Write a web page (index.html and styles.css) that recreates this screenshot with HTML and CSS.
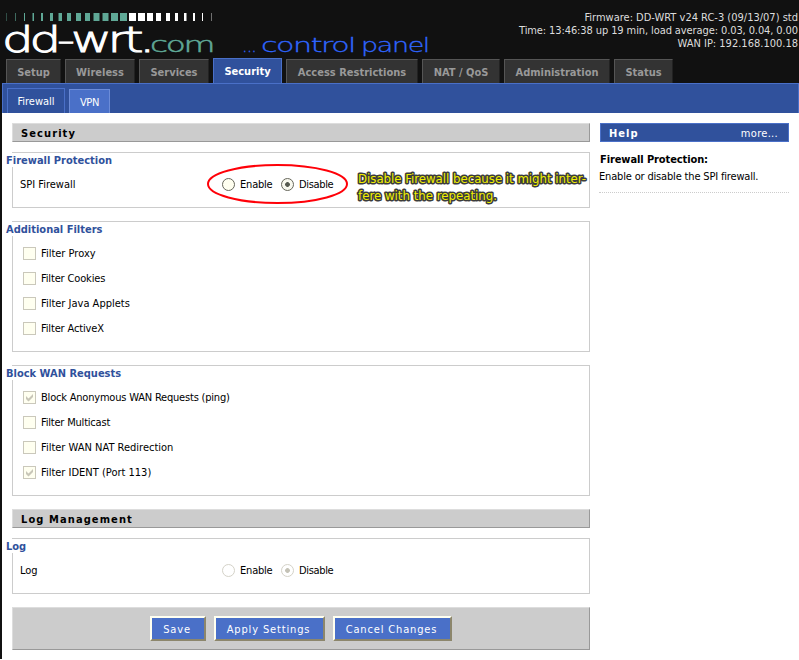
FILE: index.html
```html
<!DOCTYPE html>
<html lang="en">
<head>
<meta charset="utf-8">
<title>DD-WRT - Security</title>
<link rel="stylesheet" href="styles.css">
</head>
<body>
<header class="header">
  <svg class="logo" width="440" height="58" viewBox="0 0 440 58" role="img" aria-label="dd-wrt.com control panel">
    <g fill="#5fa896">
      <rect x="6" y="13" width="1" height="8" opacity=".4"/><rect x="15" y="13" width="1" height="8" opacity=".6"/><rect x="24" y="13" width="1" height="8"/><rect x="32.500" y="13" width="1.500" height="8"/><rect x="41" y="13" width="2" height="8"/><rect x="50" y="13" width="3" height="8"/><rect x="58.500" y="13" width="3.500" height="8"/><rect x="67" y="13" width="4" height="8"/><rect x="76" y="13" width="5" height="8"/><rect x="85" y="13" width="5" height="8"/><rect x="93.500" y="13" width="6" height="8"/><rect x="102.500" y="13" width="6" height="8"/><rect x="111" y="13" width="7" height="8"/><rect x="120" y="13" width="7" height="8"/>
    </g>
    <g fill="#fff">
      <rect x="129" y="13" width="7" height="8"/><rect x="138" y="13" width="7" height="8"/><rect x="147" y="13" width="6" height="8"/><rect x="156" y="13" width="5" height="8"/><rect x="166" y="13" width="4" height="8"/><rect x="175" y="13" width="3" height="8"/><rect x="184" y="13" width="2.500" height="8"/><rect x="193" y="13" width="2" height="8"/><rect x="202" y="13" width="1" height="8"/><rect x="211" y="13" width="1" height="8" opacity=".4"/>
    </g>
    <text class="logo-name" x="2" y="52" textLength="149" lengthAdjust="spacingAndGlyphs">dd-wrt.</text>
    <text class="logo-com" x="150" y="52" textLength="63" lengthAdjust="spacingAndGlyphs">com</text>
    <text class="logo-panel" x="242" y="52" textLength="14" lengthAdjust="spacingAndGlyphs">...</text>
    <text class="logo-panel" x="261" y="52" textLength="94" lengthAdjust="spacingAndGlyphs">control</text>
    <text class="logo-panel" x="361" y="52" textLength="68" lengthAdjust="spacingAndGlyphs">panel</text>
  </svg>
  <div class="info">
    <div>Firmware: DD-WRT v24 RC-3 (09/13/07) std</div>
    <div class="time">Time: 13:46:38 up 19 min, load average: 0.03, 0.04, 0.00</div>
    <div>WAN IP: 192.168.100.18</div>
  </div>
</header>
<nav class="tabs">
  <a>Setup</a><a>Wireless</a><a>Services</a><a class="active">Security</a><a>Access Restrictions</a><a>NAT / QoS</a><a>Administration</a><a>Status</a>
</nav>
<div class="page">
  <nav class="subtabs"><a class="current">Firewall</a><a class="other">VPN</a></nav>
  <div class="columns">
    <main class="main">
      <h2>Security</h2>
      <section class="group short">
        <h3>Firewall Protection</h3>
        <div class="setting">
          <span class="name">SPI Firewall</span>
          <i class="radio"></i><span class="enable">Enable</span>
          <i class="radio on"></i><span class="disable">Disable</span>
        </div>
        <svg class="note" width="390" height="50" viewBox="0 0 390 50">
          <ellipse cx="77.500" cy="25" rx="69.500" ry="19" fill="none" stroke="#ff0008" stroke-width="2"/>
          <text x="158" y="24" textLength="228" lengthAdjust="spacingAndGlyphs">Disable Firewall because it might inter-</text>
          <text x="158" y="41" textLength="139" lengthAdjust="spacingAndGlyphs">fere with the repeating.</text>
        </svg>
      </section>
      <section class="group">
        <h3>Additional Filters</h3>
        <div class="check"><i class="box"></i>Filter Proxy</div>
        <div class="check"><i class="box"></i><span class="tight">Filter Cookies</span></div>
        <div class="check"><i class="box"></i>Filter Java Applets</div>
        <div class="check"><i class="box"></i><span class="tight">Filter ActiveX</span></div>
      </section>
      <section class="group">
        <h3>Block WAN Requests</h3>
        <div class="check"><i class="box"><svg viewBox="0 0 11 11"><path d="M2 4v3l2.500 2.500L9 5V2L4.500 6.500z"/></svg></i><span class="tighter">Block Anonymous WAN Requests (ping)</span></div>
        <div class="check"><i class="box"></i><span class="tighter">Filter Multicast</span></div>
        <div class="check"><i class="box"></i>Filter WAN NAT Redirection</div>
        <div class="check"><i class="box"><svg viewBox="0 0 11 11"><path d="M2 4v3l2.500 2.500L9 5V2L4.500 6.500z"/></svg></i>Filter IDENT (Port 113)</div>
      </section>
      <h2>Log Management</h2>
      <section class="group short">
        <h3>Log</h3>
        <div class="setting">
          <span class="name">Log</span>
          <i class="radio off"></i><span class="enable">Enable</span>
          <i class="radio off on"></i><span class="disable">Disable</span>
        </div>
      </section>
      <div class="actions">
        <button class="save">Save</button><button class="apply">Apply Settings</button><button class="cancel">Cancel Changes</button>
      </div>
    </main>
    <aside class="help">
      <h2><span>Help</span><a>more...</a></h2>
      <h4>Firewall Protection:</h4>
      <p>Enable or disable the SPI firewall.</p>
    </aside>
  </div>
</div>
</body>
</html>
```
FILE: styles.css
```css
* { box-sizing: border-box; }
body {
  margin: 0;
  height: 660px;
  overflow: hidden;
  background: #fff;
  color: #000;
  font: 11px/13px "DejaVu Sans Condensed", "DejaVu Sans", sans-serif;
  font-stretch: condensed;
  white-space: nowrap;
}
h2, h3, h4, p { margin: 0; font-size: 11px; }
.header {
  height: 58px;
  background: #111;
  display: flex;
  justify-content: space-between;
}
.logo { overflow: visible; }
.logo-name, .logo-com, .logo-panel {
  font-family: "DejaVu Sans Light", "DejaVu Sans", sans-serif;
  font-weight: 200;
  font-stretch: normal;
}
.logo-name { font-size: 36px; letter-spacing: -3px; fill: #fff; stroke: #fff; stroke-width: 1px; }
.logo-com { font-size: 21px; letter-spacing: -1.5px; fill: #5fa896; stroke: #5fa896; stroke-width: .5px; }
.logo-panel { font-size: 20px; letter-spacing: -1px; fill: #2f66ff; stroke: #2f66ff; stroke-width: .3px; }
.info { padding: 11px 1px 0 0; color: #ddd; text-align: right; }
.time { letter-spacing: -.1px; }
.tabs {
  height: 25px;
  background: #111;
  padding-left: 6px;
  display: grid;
  grid-template-columns: 55px 70px 70px 69px 132px 78px 106px 59px;
  column-gap: 4px;
  align-items: end;
}
.tabs a {
  height: 24px;
  border: 1px solid #555;
  border-right-color: #222;
  border-bottom: 0;
  background: #333;
  color: #999;
  font-weight: bold;
  text-align: center;
  line-height: 25px;
}
.tabs .active { height: 25px; background: #30519c; border-color: #4a70c8; color: #fff; }
.page { border-left: 2px solid #111; height: 576px; }
.subtabs {
  height: 30px;
  background: #30519c;
  border: 1px solid #4a70c8;
  border-bottom: 0;
  display: flex;
  align-items: flex-end;
  gap: 4px;
  padding-left: 4px;
}
.subtabs a { color: #fff; text-align: center; border: 1px solid #4a70c8; border-bottom: 0; }
.subtabs .current { width: 58px; height: 25px; line-height: 25px; }
.subtabs .other { width: 41px; height: 24px; line-height: 25px; letter-spacing: -.3px; background: #4a70c8; border-color: #6c8cd8; }
.columns { display: flex; gap: 10px; padding: 10px 0 0 10px; }
.main { width: 578px; }
.main h2 {
  height: 19px;
  border: 1px solid #ddd;
  border-right-color: #999;
  border-bottom-color: #999;
  background: #ccc;
  padding-left: 8px;
  line-height: 19px;
  letter-spacing: 1.1px;
}
.group { position: relative; border: 1px solid #ccc; height: 131px; margin: 0 0 13px; }
.short { height: 56px; }
h2 + .group { margin-top: 10px; }
.group h3 { width: max-content; height: 14px; margin-left: -7px; background: #fff; color: #30519c; line-height: 15px; }
.setting { display: flex; align-items: center; height: 20px; margin-top: 7px; padding-left: 7px; }
.name { width: 202px; }
.enable { width: 41px; letter-spacing: -.2px; }
.disable { letter-spacing: -.35px; }
.radio {
  width: 13px;
  height: 13px;
  margin-right: 5px;
  border: 1px solid #66665a;
  border-radius: 50%;
  background: #fffff0;
}
.radio.on { background: radial-gradient(circle, #55594f 0 2px, #f8f8ee 2.700px); }
.radio.off { border-color: #d4d2c8; background: #fff; }
.radio.off.on { background: radial-gradient(circle, #c4c2b6 0 2px, #fff 2.700px); }
.note { position: absolute; left: 187px; top: 6px; }
.note text {
  font-size: 13px;
  fill: #f0f000;
  stroke: #3c3c3c;
  stroke-width: 3px;
  stroke-linejoin: round;
  paint-order: stroke;
}
.check { display: flex; align-items: center; height: 25px; padding-left: 10px; }
h3 + .check { margin-top: 5px; }
.tight { letter-spacing: -.15px; }
.tighter { letter-spacing: -.2px; }
.box { width: 13px; height: 13px; margin-right: 5px; border: 1px solid #cac8bb; background: #fffff0; }
.box svg { display: block; width: 11px; height: 11px; fill: #c8c6b8; }
.actions {
  height: 43px;
  border: 1px solid #ddd;
  border-right-color: #999;
  border-bottom-color: #999;
  background: #ccc;
  display: flex;
  justify-content: center;
  gap: 8px;
  padding-top: 8px;
}
.actions button {
  height: 25px;
  padding: 1px 2px 0 0;
  border: 2px solid;
  border-color: #fffff0 #8c866c #8c866c #fffff0;
  background: #4a70c8;
  color: #fff;
  font: inherit;
  letter-spacing: .85px;
}
.save { width: 56px; }
.apply { width: 111px; }
.cancel { width: 119px; }
.help { width: 189px; }
.help h2 {
  display: flex;
  justify-content: space-between;
  height: 19px;
  border: 1px solid #4a70c8;
  background: #30519c;
  color: #fff;
  padding: 0 10px 0 8px;
  line-height: 19px;
  letter-spacing: 1px;
}
.help h2 a { font-weight: normal; letter-spacing: .3px; }
.help h4 { margin-top: 10px; line-height: 15px; letter-spacing: -.1px; }
.help p { margin-left: -1px; line-height: 19px; padding-bottom: 6px; border-bottom: 1px dotted #ccc; letter-spacing: -.17px; }
```
